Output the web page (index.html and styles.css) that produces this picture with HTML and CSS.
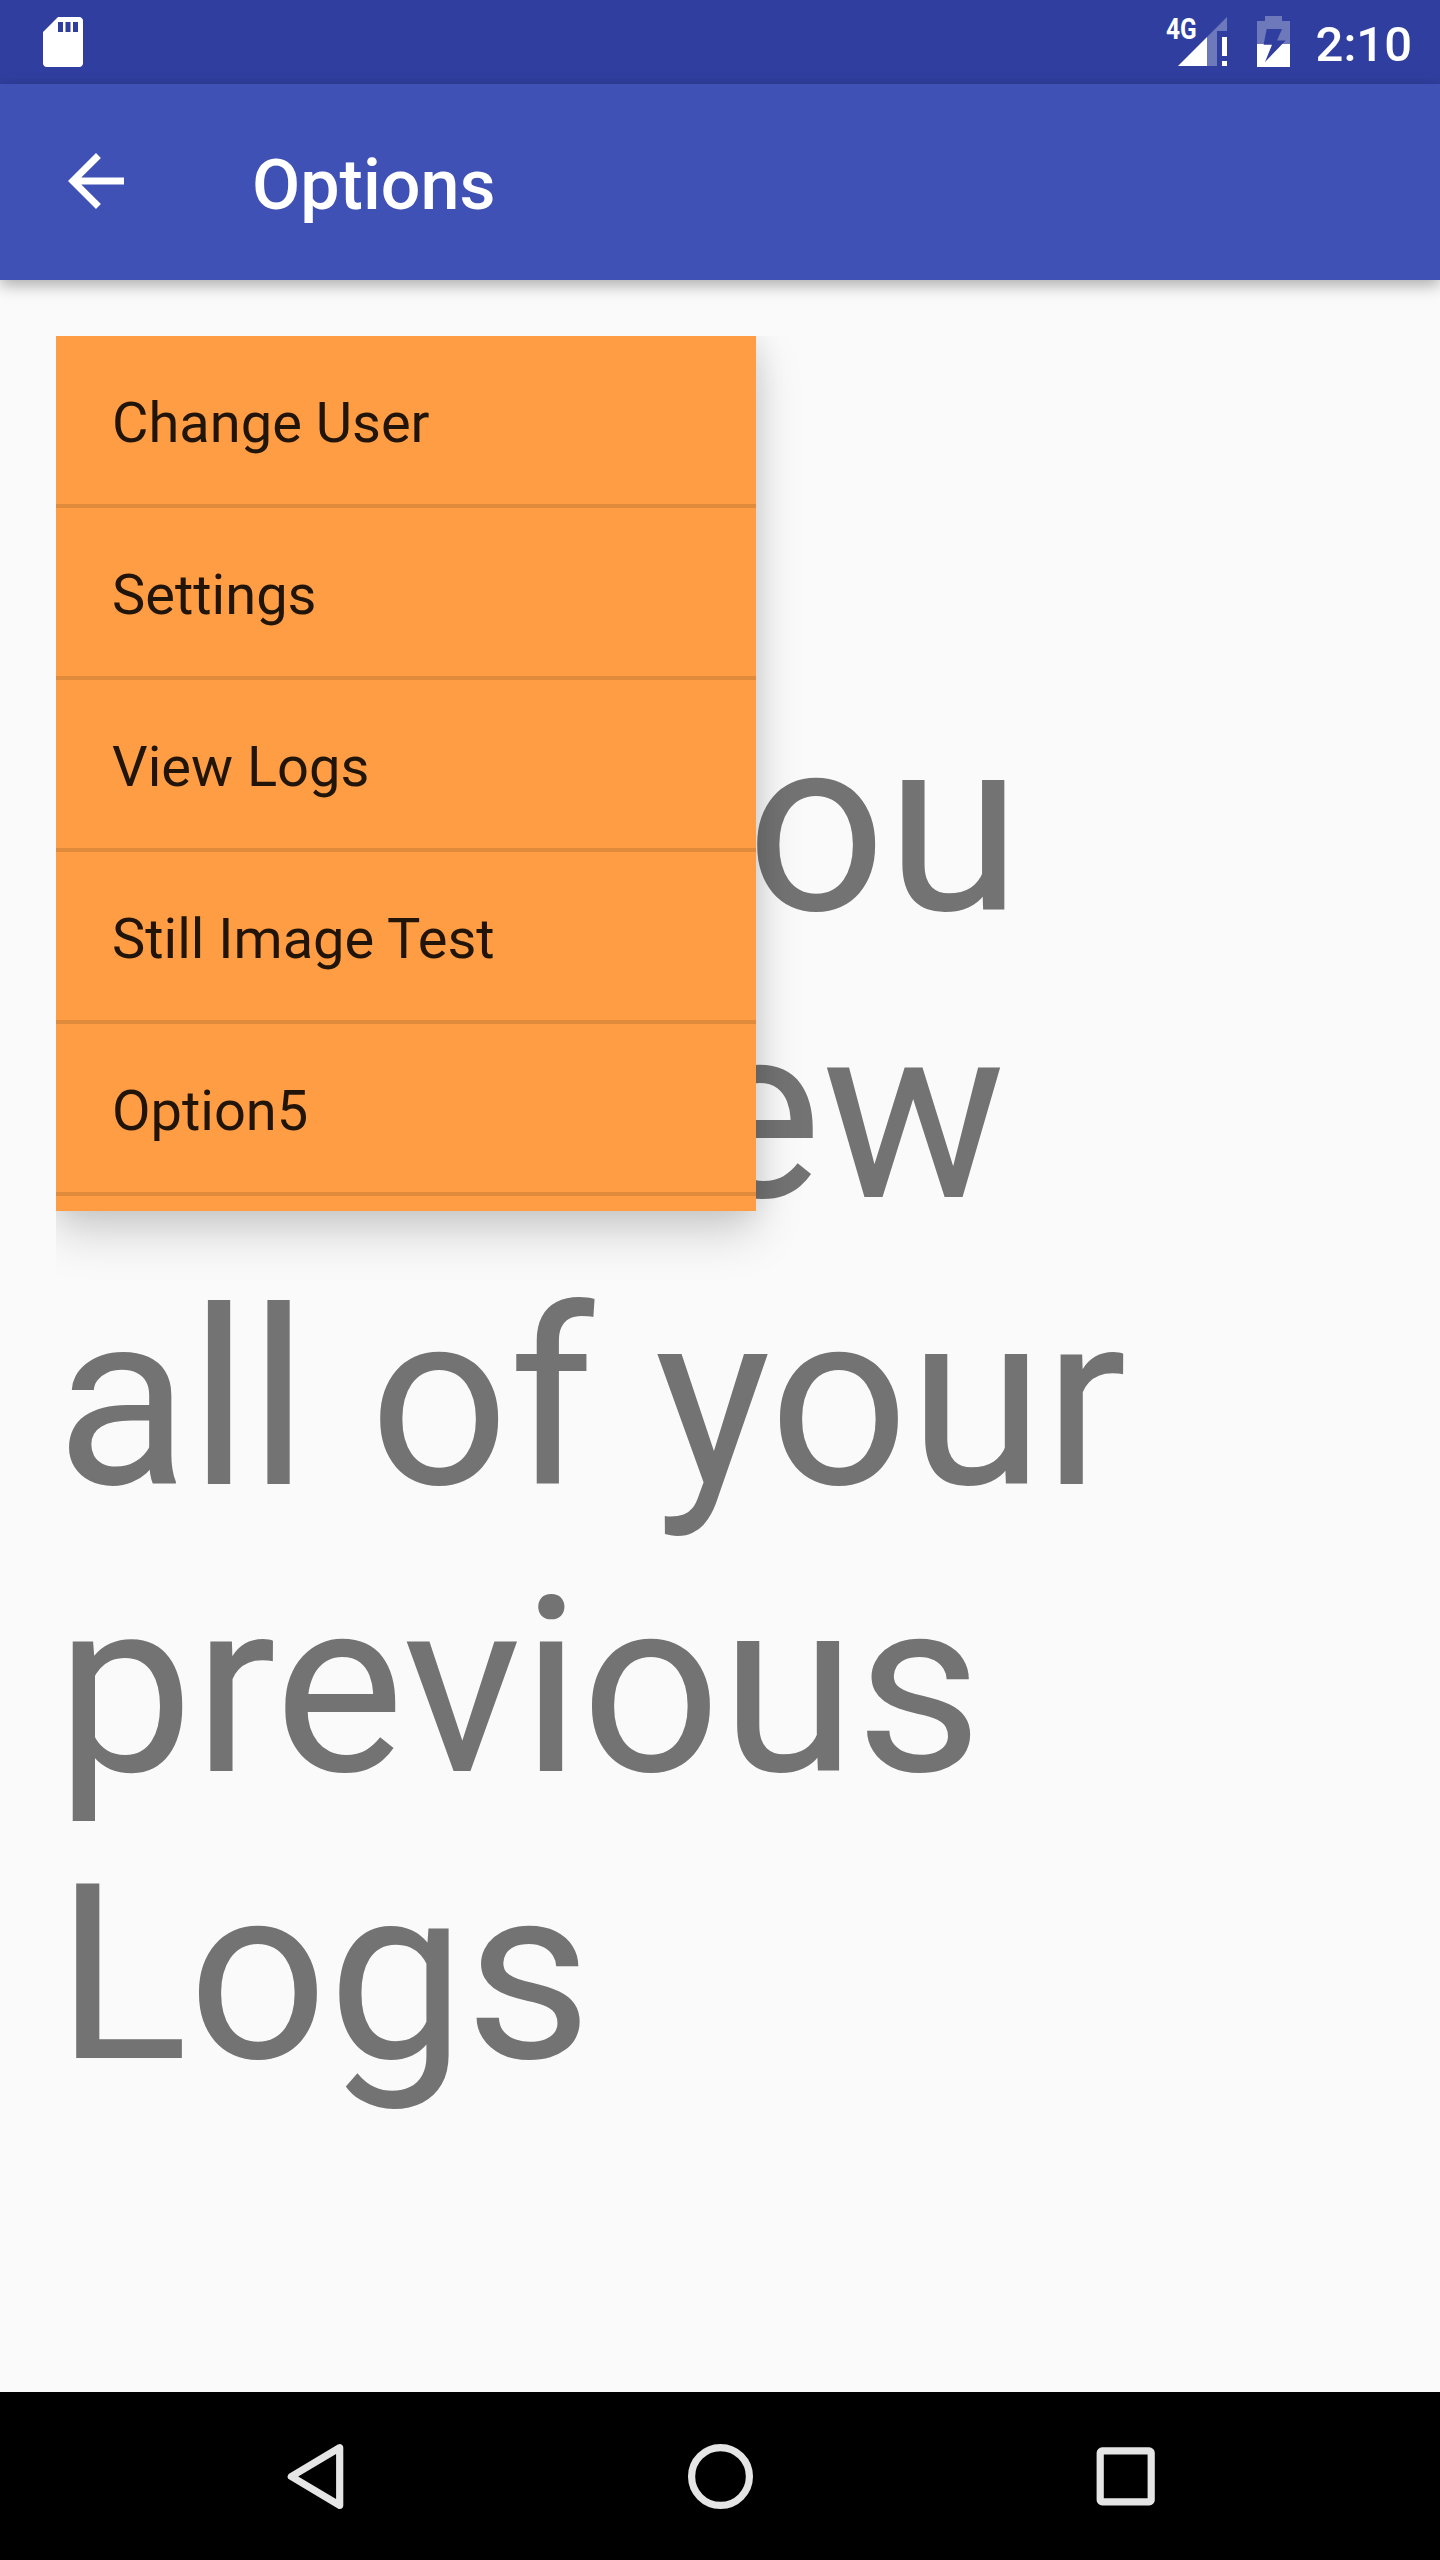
FILE: index.html
```html
<!DOCTYPE html>
<html lang="en">
<head>
<meta charset="utf-8">
<title>Options</title>
<link rel="stylesheet" href="styles.css">
</head>
<body>
<div class="screen">
  <header class="status-bar">
    <svg class="sd-icon" viewBox="0 0 24 24"><path fill="#fff" d="M18.500 2H10L4 8v12.500c0 .8.7 1.500 1.500 1.500h13c.8 0 1.500-.7 1.500-1.500v-17c0-.8-.7-1.500-1.500-1.500zM12 8h-2V4h2zm3 0h-2V4h2zm3 0h-2V4h2z"/></svg>
    <div class="status-right">
      <span class="network">4G</span>
      <svg class="signal-icon" viewBox="0 0 50 50"><path fill="#fff" fill-opacity=".3" d="M49 0v14H39v35H29V20z"/><path fill="#fff" d="M0 49l29-29v29zM44 20h5v19h-5zM44 44h5v5h-5z"/></svg>
      <svg class="battery-icon" viewBox="0 0 33 51"><path fill="#fff" fill-opacity=".3" d="M8 0h17v5h8v23h-7.700l3.400-3.500H20L25 13H9.700l-3 15H0V5h8z"/><path fill="#fff" d="M0 28h6.700v.7H15L8 46l17.300-18H33v23H0z"/></svg>
      <span class="clock">2:10</span>
    </div>
  </header>
  <div class="toolbar">
    <svg class="back-icon" viewBox="0 0 24 24"><path fill="#fff" d="M20 11H7.800l5.600-5.600L12 4l-8 8 8 8 1.400-1.400L7.800 13H20z"/></svg>
    <h1 class="title">Options</h1>
  </div>
  <main class="content">
    <p class="message">Here you<br>can view<br>all of your<br>previous<br>Logs</p>
    <div class="menu-layer">
      <ul class="menu">
        <li class="menu-item">Change User</li>
        <li class="menu-item">Settings</li>
        <li class="menu-item">View Logs</li>
        <li class="menu-item">Still Image Test</li>
        <li class="menu-item">Option5</li>
      </ul>
    </div>
  </main>
  <nav class="nav-bar">
    <svg class="nav-icon" viewBox="0 0 84 84"><path d="M66.700 13.700V71.300L18.300 42.500z"/></svg>
    <svg class="nav-icon" viewBox="0 0 84 84"><circle cx="42.500" cy="42.500" r="28.900"/></svg>
    <svg class="nav-icon" viewBox="0 0 84 84"><rect x="17.200" y="16.900" width="51" height="51" rx="2"/></svg>
  </nav>
</div>
</body>
</html>
```
FILE: styles.css
```css
* { box-sizing: border-box; }

body {
  margin: 0;
  font-family: Roboto, sans-serif;
}

.screen {
  display: flex;
  flex-direction: column;
  width: 1440px;
  height: 2560px;
  overflow: hidden;
  background: #fafafa;
}

.status-bar {
  display: flex;
  justify-content: space-between;
  height: 84px;
  padding: 0 28px 0 33px;
  background: #303f9f;
  color: #fff;
}

.sd-icon {
  width: 60px;
  height: 60px;
  margin-top: 12px;
}

.status-right {
  display: flex;
  align-items: flex-start;
}

.network {
  width: 12px;
  margin-top: 12px;
  font-size: 29.5px;
  font-weight: 700;
  line-height: 34px;
  white-space: nowrap;
  transform: scaleX(.83);
  transform-origin: left;
}

.signal-icon {
  width: 50px;
  height: 50px;
  margin-top: 17px;
}

.battery-icon {
  width: 33px;
  height: 51px;
  margin: 16px 0 0 29px;
}

.clock {
  margin: 16px 0 0 26px;
  font-size: 49px;
  font-weight: 500;
  line-height: 58px;
}

.toolbar {
  position: relative;
  z-index: 1;
  display: flex;
  align-items: center;
  height: 196px;
  padding-left: 54px;
  background: #3f51b5;
  box-shadow: 0 5px 15px rgba(0, 0, 0, .32);
}

.back-icon {
  width: 84px;
  height: 84px;
  margin-bottom: 3px;
}

.title {
  margin: 6px 0 0 114px;
  color: #fff;
  font-size: 70px;
  font-weight: 500;
  line-height: 82px;
}

.content {
  position: relative;
  flex: 1;
  padding: 403px 56px 0;
}

.message {
  margin: 0;
  color: #737373;
  font-size: 245px;
  line-height: 287px;
}

/* Clips the menu shadow at the top and left edges of the list */
.menu-layer {
  position: absolute;
  top: 56px;
  left: 56px;
  width: 800px;
  height: 975px;
  overflow: hidden;
}

.menu {
  width: 700px;
  height: 875px;
  margin: 0;
  padding: 0;
  list-style: none;
  background: #ff9d45;
  box-shadow: 0 22px 44px rgba(0, 0, 0, .17), 0 0 28px rgba(0, 0, 0, .1);
}

.menu-item {
  height: 172px;
  padding: 3px 0 0 56px;
  border-bottom: 4px solid #e08b3c;
  color: #211409;
  font-size: 56px;
  line-height: 168px;
}

.nav-bar {
  display: flex;
  justify-content: space-between;
  align-items: center;
  height: 168px;
  padding: 0 273px;
  background: #000;
}

.nav-icon {
  width: 84px;
  height: 84px;
  fill: none;
  stroke: #e5e5e5;
  stroke-width: 7.2px;
  stroke-linejoin: round;
}
```
